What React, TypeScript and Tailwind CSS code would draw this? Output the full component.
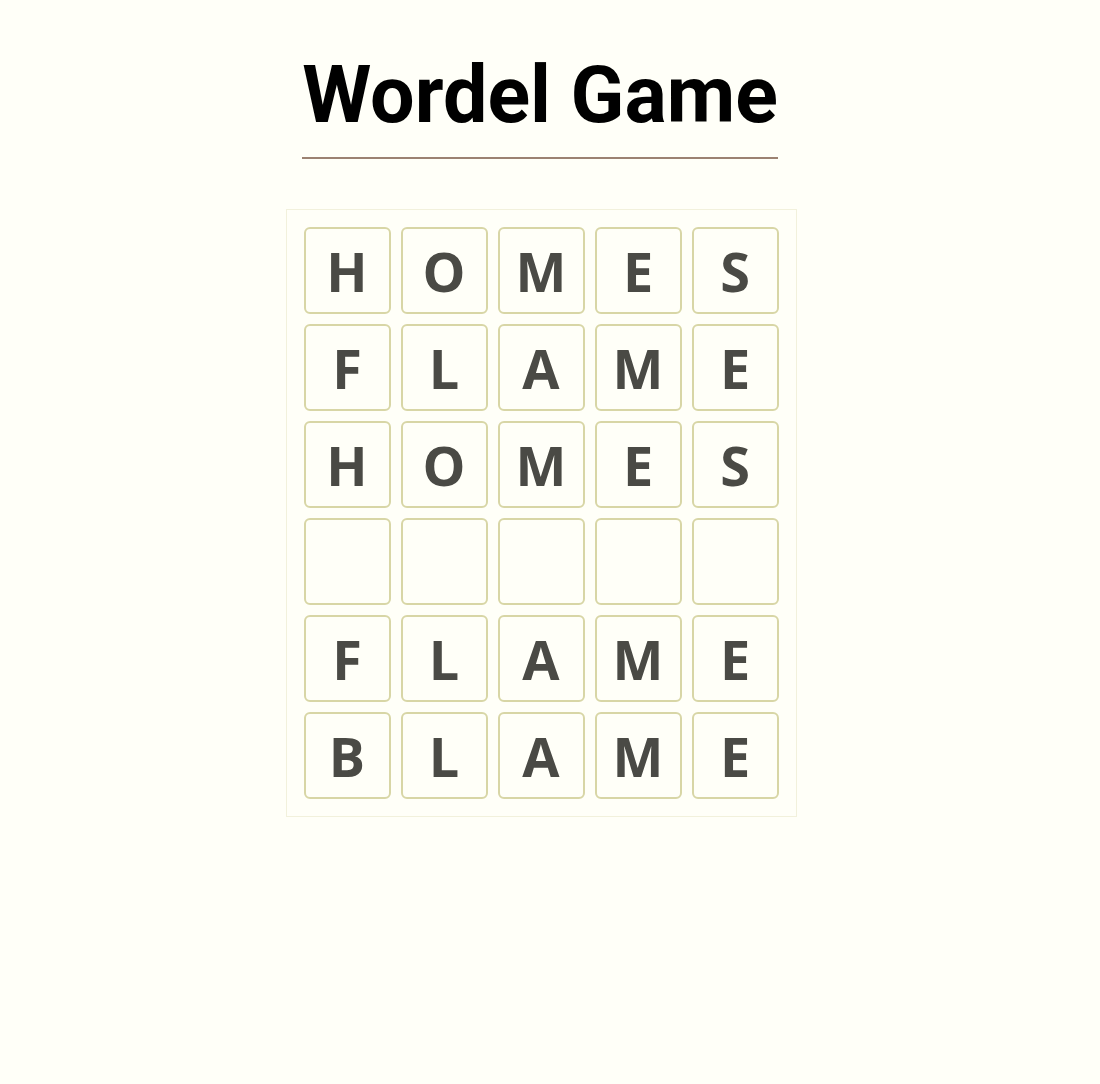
const rows = ["HOMES", "FLAME", "HOMES", "", "FLAME", "BLAME"];

function Tile({ letter }: { letter: string }) {
  return (
    <div className="w-[87px] h-[87px] border-2 border-[#d8d6a6] rounded-md flex items-center justify-center text-[54px] font-bold text-[#4a4a45] leading-none">
      {letter}
    </div>
  );
}

export default function App() {
  return (
    <div className="min-h-[1084px] bg-[#fffff8] flex flex-col items-center pt-[45px] pr-[20px]">
      <h1 className="font-['Roboto',sans-serif] font-bold text-[79px] leading-[100px] text-black border-b-2 border-[#9c8272] pb-[12px]">
        Wordel Game
      </h1>

      <div className="mt-[50px] ml-[2px] border border-[#f2f1dc] p-[17px] flex flex-col gap-[10px] font-['Open_Sans',sans-serif]">
        {rows.map((word, r) => (
          <div key={r} className="flex gap-[10px]">
            {[0, 1, 2, 3, 4].map((i) => (
              <Tile key={i} letter={word[i] ?? ""} />
            ))}
          </div>
        ))}
      </div>
    </div>
  );
}
